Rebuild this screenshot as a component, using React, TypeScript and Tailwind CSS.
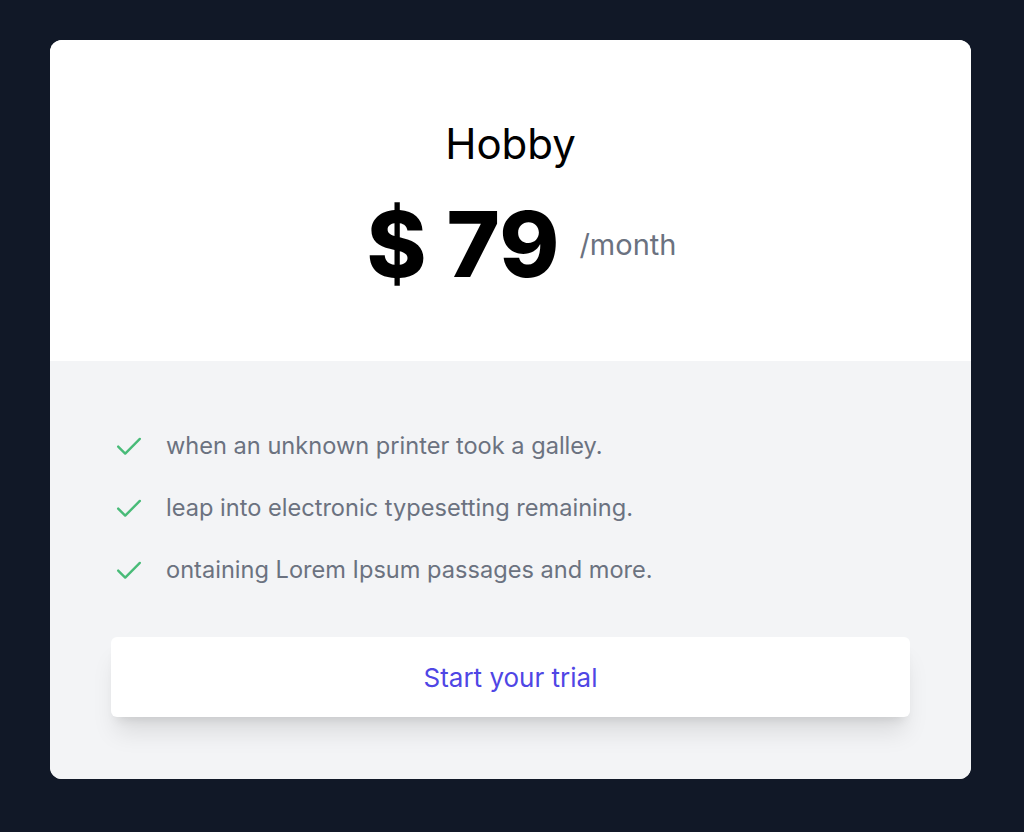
import React from 'react';

const features = [
  'when an unknown printer took a galley.',
  'leap into electronic typesetting remaining.',
  'ontaining Lorem Ipsum passages and more.',
];

function CheckIcon() {
  return (
    <svg className="w-[26px] h-[26px] shrink-0" viewBox="0 0 24 24" fill="none" stroke="#48bb78" strokeWidth={2.2} strokeLinecap="round" strokeLinejoin="round">
      <path d="M2 12.5l6.5 6.5L22 5.5" />
    </svg>
  );
}

export default function App() {
  return (
    <div className="min-h-screen bg-[#111827] pt-10 pl-[50px] pb-[53px]" style={{ fontFamily: 'Inter, "Noto Sans", sans-serif' }}>
      <div className="w-[921px] rounded-xl overflow-hidden bg-white">
        {/* header */}
        <div className="flex flex-col items-center pt-[83px] pb-[71px] bg-white">
          <h2 className="text-[42px] leading-none text-black">Hobby</h2>
          <div className="mt-[34px] ml-[22px] flex items-center">
            <span className="text-[91px] leading-none font-extrabold text-black">$ 79</span>
            <span className="ml-5 text-[29px] leading-none text-[#6b7280]">/month</span>
          </div>
        </div>

        {/* body */}
        <div className="bg-[#f3f4f6] px-[61px] pt-[71px] pb-[62px]">
          <ul className="flex flex-col gap-[34px] pl-[5px]">
            {features.map((f) => (
              <li key={f} className="flex items-center">
                <CheckIcon />
                <span className="ml-[24px] text-[23.6px] leading-7 text-[#6b7280]">{f}</span>
              </li>
            ))}
          </ul>
          <button className="mt-[53px] w-full h-20 rounded-md bg-white shadow-xl text-[26px] text-[#4f46e5]">
            Start your trial
          </button>
        </div>
      </div>
    </div>
  );
}
